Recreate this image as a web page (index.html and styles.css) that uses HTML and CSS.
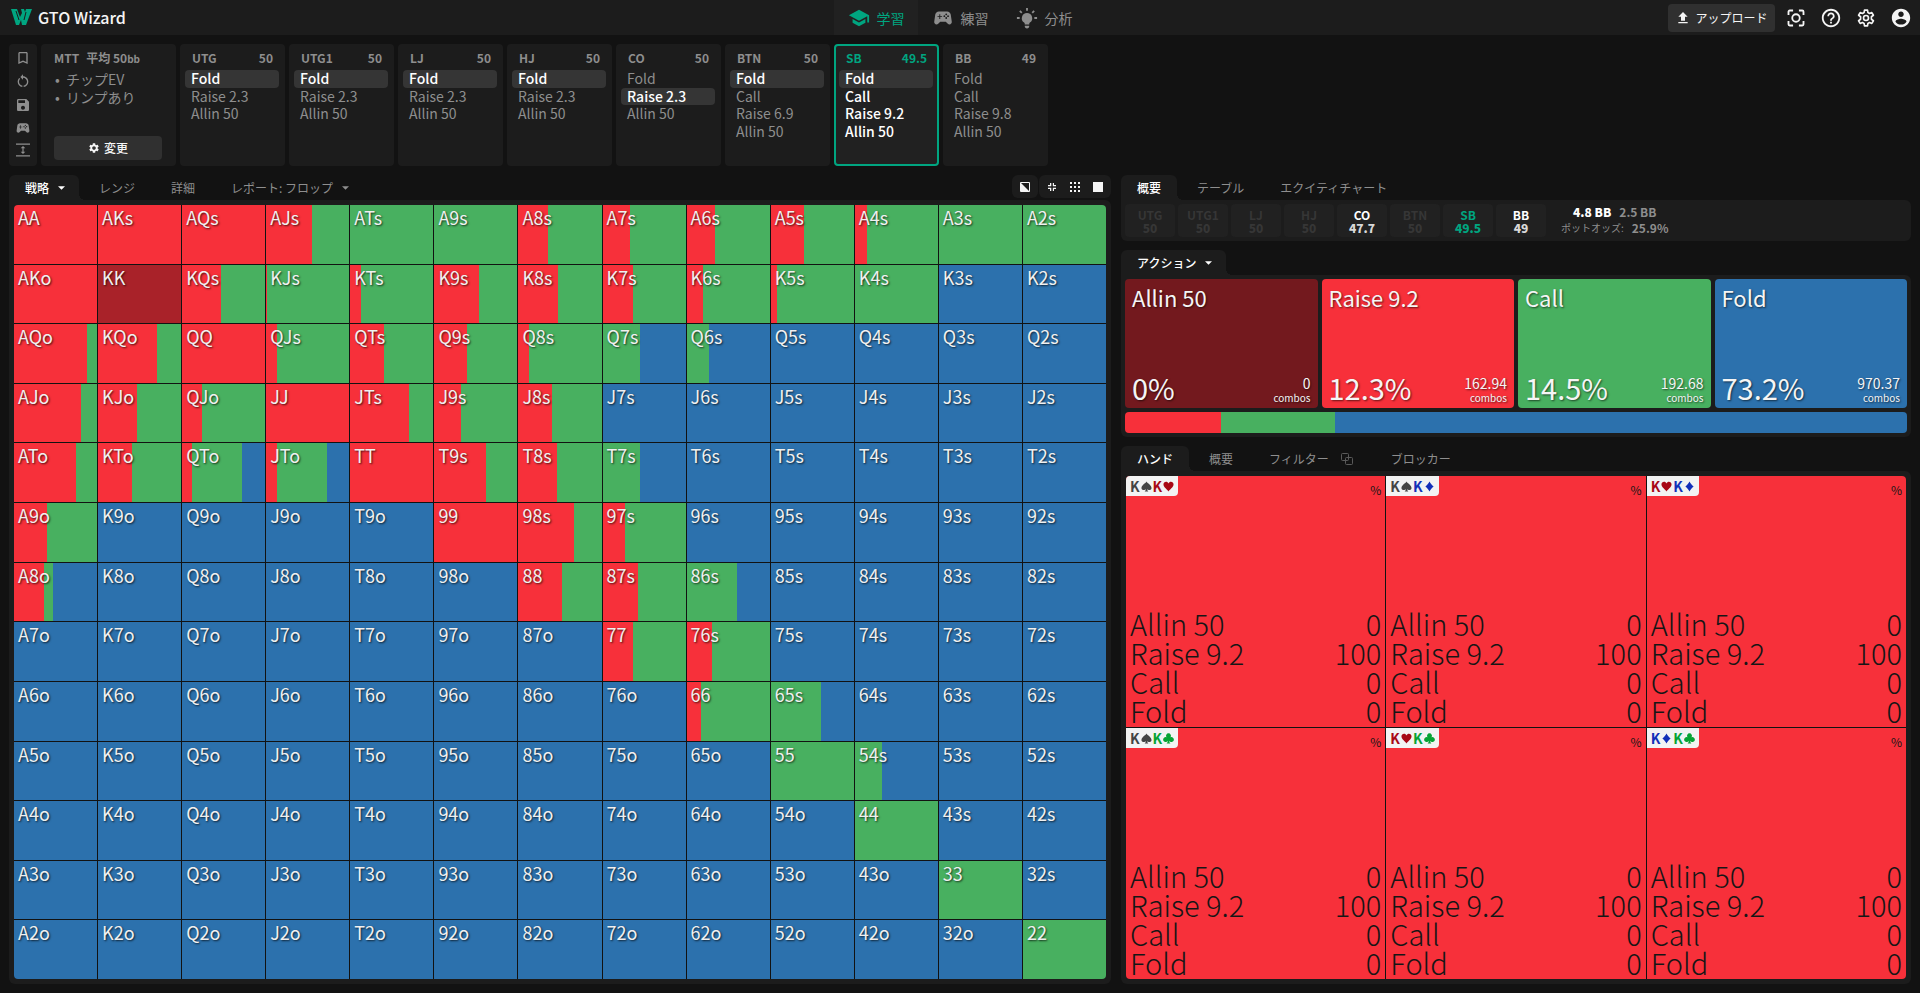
FILE: index.html
```html
<!DOCTYPE html>
<html lang="ja">
<head>
<meta charset="utf-8">
<title>GTO Wizard</title>
<link rel="stylesheet" href="styles.css">
</head>
<body>
<svg class="sprite" aria-hidden="true">
  <symbol id="i-school" viewBox="0 0 24 24"><path d="M5 13.18v4L12 21l7-3.82v-4L12 17l-7-3.82zM12 3L1 9l11 6 9-4.91V17h2V9L12 3z"/></symbol>
  <symbol id="i-pad" viewBox="0 0 24 24"><path fill-rule="evenodd" d="M21.58 16.09l-1.09-7.66C20.21 6.46 18.52 5 16.53 5H7.47C5.48 5 3.79 6.46 3.51 8.43l-1.09 7.66C2.2 17.63 3.39 19 4.94 19c.68 0 1.32-.27 1.8-.75L9 16h6l2.25 2.25c.48.48 1.13.75 1.8.75 1.56 0 2.75-1.37 2.53-2.91zM11 11H9v2H8v-2H6v-1h2V8h1v2h2zM15.5 7a1 1 0 1 1 0 2a1 1 0 0 1 0-2zM15.5 11a1 1 0 1 1 0 2a1 1 0 0 1 0-2zM13.5 9a1 1 0 1 1 0 2a1 1 0 0 1 0-2zM17.5 9a1 1 0 1 1 0 2a1 1 0 0 1 0-2z"/></symbol>
  <symbol id="i-bulb" viewBox="0 0 24 24"><path d="M12 6.5a5.7 5.7 0 0 0-3.2 10.4c.5.3.7.7.7 1.2v.9h5v-.9c0-.5.2-.9.7-1.2A5.7 5.7 0 0 0 12 6.500zM9.500 20.500h5c0 2-1 3-2.500 3s-2.500-1-2.500-3zM11 1h2v3h-2zM1 11h3v2H1zM20 11h3v2h-3zM3.500 5l1.400-1.400L7 5.700 5.600 7.100zM20.500 5l-1.400-1.400L17 5.700l1.400 1.400z"/></symbol>
  <symbol id="i-bookmark" viewBox="0 0 24 24"><path d="M17 3H7c-1.1 0-1.99.9-1.99 2L5 21l7-3 7 3V5c0-1.1-.9-2-2-2zm0 15l-5-2.18L7 18V5h10v13z"/></symbol>
  <symbol id="i-restart" viewBox="0 0 24 24"><path d="M12 5V2L8 6l4 4V7c3.31 0 6 2.69 6 6 0 2.97-2.17 5.43-5 5.91v2.02c3.95-.49 7-3.85 7-7.93 0-4.42-3.58-8-8-8zm-6 8c0-1.65.67-3.15 1.76-4.24L6.34 7.34C4.9 8.79 4 10.79 4 13c0 4.08 3.05 7.44 7 7.93v-2.02c-2.83-.48-5-2.94-5-5.91z"/></symbol>
  <symbol id="i-save" viewBox="0 0 24 24"><path d="M17 3H5c-1.110 0-2 .9-2 2v14c0 1.100.89 2 2 2h14c1.100 0 2-.9 2-2V7l-4-4zm-5 16c-1.660 0-3-1.340-3-3s1.340-3 3-3 3 1.340 3 3-1.340 3-3 3zm3-10H5V5h10v4z"/></symbol>
  <symbol id="i-expand" viewBox="0 0 24 24"><path d="M0 1h24v2H0zM0 21h24v2H0zM12 5l4 4h-3v6h3l-4 4-4-4h3V9H8z"/></symbol>
  <symbol id="i-gear" viewBox="0 0 24 24"><path d="M19.14 12.94c.04-.3.06-.61.06-.94 0-.32-.02-.64-.07-.94l2.03-1.58c.18-.14.23-.41.12-.61l-1.920-3.320c-.12-.22-.37-.29-.59-.22l-2.390.96c-.5-.38-1.030-.7-1.620-.94l-.36-2.540c-.04-.24-.24-.41-.48-.41h-3.840c-.24 0-.43.17-.47.41l-.36 2.540c-.59.24-1.130.57-1.620.94l-2.390-.96c-.22-.08-.47 0-.59.22L2.740 8.870c-.12.21-.08.47.12.61l2.030 1.580c-.05.3-.09.63-.09.94s.02.64.07.94l-2.030 1.580c-.18.14-.23.41-.12.61l1.920 3.320c.12.22.37.29.59.22l2.390-.96c.5.38 1.030.7 1.620.94l.36 2.540c.05.24.24.41.48.41h3.840c.24 0 .44-.17.47-.41l.36-2.540c.59-.24 1.130-.56 1.620-.94l2.390.96c.22.08.47 0 .59-.22l1.920-3.320c.12-.22.07-.47-.12-.61l-2.010-1.580zM12 15.600c-1.980 0-3.600-1.620-3.600-3.600s1.620-3.600 3.600-3.600 3.600 1.620 3.600 3.600-1.620 3.600-3.600 3.600z"/></symbol>
  <symbol id="i-gear-line" viewBox="0 0 24 24"><g fill="none" stroke="currentColor" stroke-width="2" stroke-linejoin="round"><path d="M10.200 2.500h3.600l.5 3 1.900 1.100 2.800-1.100 1.900 3.200-2.400 1.800v3l2.400 1.800-1.900 3.200-2.800-1.100-1.900 1.100-.5 3h-3.600l-.5-3-1.900-1.100-2.800 1.100-1.900-3.200 2.400-1.800v-3L3.100 8.700l1.900-3.200 2.800 1.100 1.900-1.100z"/><circle cx="12" cy="12" r="3"/></g></symbol>
  <symbol id="i-help" viewBox="0 0 24 24"><path d="M11 18h2v-2h-2v2zm1-16C6.480 2 2 6.480 2 12s4.480 10 10 10 10-4.480 10-10S17.520 2 12 2zm0 18c-4.410 0-8-3.590-8-8s3.590-8 8-8 8 3.590 8 8-3.590 8-8 8zm0-14c-2.210 0-4 1.790-4 4h2c0-1.100.9-2 2-2s2 .9 2 2c0 2-3 1.750-3 5h2c0-2.250 3-2.500 3-5 0-2.210-1.790-4-4-4z"/></symbol>
  <symbol id="i-user" viewBox="0 0 24 24"><path d="M12 2C6.480 2 2 6.480 2 12s4.480 10 10 10 10-4.480 10-10S17.520 2 12 2zm0 3c1.660 0 3 1.340 3 3s-1.340 3-3 3-3-1.340-3-3 1.340-3 3-3zm0 14.200c-2.500 0-4.710-1.280-6-3.220.03-1.990 4-3.080 6-3.080 1.990 0 5.970 1.090 6 3.080-1.290 1.940-3.500 3.220-6 3.220z"/></symbol>
  <symbol id="i-focus" viewBox="0 0 24 24"><g fill="none" stroke="currentColor" stroke-width="2.200"><path d="M3 8.500V4.500A1.500 1.500 0 0 1 4.500 3h4M15.500 3h4A1.500 1.500 0 0 1 21 4.500v4M21 15.500v4a1.500 1.500 0 0 1-1.500 1.500h-4M8.500 21h-4A1.500 1.500 0 0 1 3 19.500v-4"/><circle cx="12" cy="12" r="4.500"/></g></symbol>
  <symbol id="i-upload" viewBox="0 0 24 24"><path d="M5 20h14v-2H5v2zm0-10h4v6h6v-6h4l-7-7-7 7z"/></symbol>
  <symbol id="i-copy" viewBox="0 0 12 12"><g fill="none" stroke="currentColor"><rect x=".5" y=".5" width="7" height="7" rx="1"/><rect x="4.500" y="4.500" width="7" height="7" rx="1"/></g></symbol>
  <symbol id="i-caret" viewBox="0 0 8 4"><path d="M0 0h8L4 4z"/></symbol>
  <symbol id="i-half" viewBox="0 0 10 10"><path d="M1 1l8.500 8.500H1z"/><path fill="none" stroke="currentColor" d="M.5.5h9v9h-9z"/></symbol>
  <symbol id="i-shrink" viewBox="0 0 10 10"><path d="M3 1h1.300v3.200H1V3h2zM5.800 1H7v2h2v1.200H5.800zM1 5.800h3.300V9H3V7H1zM5.800 5.800H9V7H7v2H5.800z"/></symbol>
  <symbol id="i-dots" viewBox="0 0 10 10"><path d="M0 0h2v2H0zM4 0h2v2H4zM8 0h2v2H8zM0 4h2v2H0zM4 4h2v2H4zM8 4h2v2H8zM0 8h2v2H0zM4 8h2v2H4zM8 8h2v2H8z"/></symbol>
  <symbol id="i-square" viewBox="0 0 10 10"><path d="M0 0h10v10H0z"/></symbol>
  <symbol id="suit-s" viewBox="0 0 12 12"><path d="M6 .5C7 2.500 11.500 4.500 11.500 7.500c0 1.500-1.200 2.400-2.500 2.400-1 0-1.800-.5-2.300-1.200.1 1.200.5 2 1.300 2.800H4c.8-.8 1.200-1.600 1.300-2.800-.5.7-1.300 1.200-2.300 1.200C1.700 9.900.5 9 .5 7.500.5 4.500 5 2.500 6 .5z"/></symbol>
  <symbol id="suit-h" viewBox="0 0 12 12"><path d="M6 11.500C5 9 .5 7 .5 3.700.5 2 1.800.8 3.300.8 4.500.8 5.500 1.500 6 2.600 6.500 1.500 7.500.8 8.700.8c1.500 0 2.800 1.200 2.800 2.900C11.500 7 7 9 6 11.500z"/></symbol>
  <symbol id="suit-d" viewBox="0 0 12 12"><path d="M6 .5C7.200 2.800 8.700 4.600 10.500 6 8.700 7.400 7.200 9.200 6 11.500 4.800 9.200 3.300 7.400 1.500 6 3.300 4.600 4.800 2.800 6 .5z"/></symbol>
  <symbol id="suit-c" viewBox="0 0 12 12"><path d="M6 .4a2.600 2.600 0 0 1 2.100 4.200A2.700 2.700 0 1 1 6.700 8.400c.1 1.300.5 2.300 1.500 3.100H3.800c1-.8 1.400-1.800 1.500-3.100A2.700 2.700 0 1 1 3.900 4.600 2.600 2.600 0 0 1 6 .4z"/></symbol>
</svg>

<header class="topbar">
  <a class="brand" href="#">
    <svg class="brand-mark" viewBox="0 0 21 16"><path d="M0 0h6l3 8 2-4-1-4h3l1 3 1-3h6l-6 16h-4l-1-5-2 5H5z"/><path class="brand-cut" d="M5 2l3 9M15 3l-2 8" /></svg>
    <span>GTO Wizard</span>
  </a>
  <nav class="mainnav">
    <a class="navitem active" href="#"><svg class="ic22"><use href="#i-school"/></svg>学習</a>
    <a class="navitem" href="#"><svg class="ic22"><use href="#i-pad"/></svg>練習</a>
    <a class="navitem" href="#"><svg class="ic22"><use href="#i-bulb"/></svg>分析</a>
  </nav>
  <div class="account">
    <button class="upload"><svg class="ic16"><use href="#i-upload"/></svg>アップロード</button>
    <button class="iconbtn" aria-label="フォーカス"><svg class="ic20"><use href="#i-focus"/></svg></button>
    <button class="iconbtn" aria-label="ヘルプ"><svg class="ic22"><use href="#i-help"/></svg></button>
    <button class="iconbtn" aria-label="設定"><svg class="ic20"><use href="#i-gear-line"/></svg></button>
    <button class="iconbtn" aria-label="アカウント"><svg class="ic22"><use href="#i-user"/></svg></button>
  </div>
</header>

<section class="spots">
  <div class="tools">
    <button aria-label="ブックマーク"><svg class="ic16"><use href="#i-bookmark"/></svg></button>
    <button aria-label="リセット"><svg class="ic16"><use href="#i-restart"/></svg></button>
    <button aria-label="保存"><svg class="ic16"><use href="#i-save"/></svg></button>
    <button aria-label="練習"><svg class="ic16"><use href="#i-pad"/></svg></button>
    <button aria-label="展開"><svg class="ic14"><use href="#i-expand"/></svg></button>
  </div>
  <div class="format">
    <div class="format-head"><span>MTT</span><span>平均 50<small>bb</small></span></div>
    <ul class="format-list"><li>チップEV</li><li>リンプあり</li></ul>
    <button class="change"><svg class="ic12"><use href="#i-gear"/></svg>変更</button>
  </div>
  <div class="seats" id="seats"></div>
</section>

<main class="board">
  <section class="column">
    <div class="tabbar">
      <button class="tab active menu">戦略<svg class="caret"><use href="#i-caret"/></svg></button>
      <button class="tab">レンジ</button>
      <button class="tab">詳細</button>
      <button class="tab menu">レポート: フロップ<svg class="caret"><use href="#i-caret"/></svg></button>
      <div class="views">
        <div class="viewgroup"><button aria-label="分割"><svg class="ic10"><use href="#i-half"/></svg></button></div>
        <div class="viewgroup wide">
          <button aria-label="縮小"><svg class="ic10"><use href="#i-shrink"/></svg></button>
          <button aria-label="グリッド"><svg class="ic10"><use href="#i-dots"/></svg></button>
          <button aria-label="全体"><svg class="ic10"><use href="#i-square"/></svg></button>
        </div>
      </div>
    </div>
    <div class="panel fill framed"><div class="matrix" id="matrix"></div></div>
  </section>

  <section class="column stack">
    <div>
      <div class="tabbar">
        <button class="tab active">概要</button>
        <button class="tab">テーブル</button>
        <button class="tab">エクイティチャート</button>
      </div>
      <div class="panel stacks">
        <div class="stackbox">UTG<b>50</b></div>
        <div class="stackbox">UTG1<b>50</b></div>
        <div class="stackbox">LJ<b>50</b></div>
        <div class="stackbox">HJ<b>50</b></div>
        <div class="stackbox live">CO<b>47.7</b></div>
        <div class="stackbox">BTN<b>50</b></div>
        <div class="stackbox hero">SB<b>49.5</b></div>
        <div class="stackbox live">BB<b>49</b></div>
        <div class="pot">
          <div><strong>4.8 BB</strong><span>2.5 BB</span></div>
          <div><small>ポットオッズ:</small><span>25.9%</span></div>
        </div>
      </div>
    </div>
    <div>
      <div class="tabbar">
        <button class="tab active menu">アクション<svg class="caret"><use href="#i-caret"/></svg></button>
      </div>
      <div class="panel actions">
        <div class="cards">
          <button class="card allin"><span class="card-name">Allin 50</span><span class="card-foot"><span class="pct">0%</span><span class="combos">0<small>combos</small></span></span></button>
          <button class="card raise"><span class="card-name">Raise 9.2</span><span class="card-foot"><span class="pct">12.3%</span><span class="combos">162.94<small>combos</small></span></span></button>
          <button class="card call"><span class="card-name">Call</span><span class="card-foot"><span class="pct">14.5%</span><span class="combos">192.68<small>combos</small></span></span></button>
          <button class="card fold"><span class="card-name">Fold</span><span class="card-foot"><span class="pct">73.2%</span><span class="combos">970.37<small>combos</small></span></span></button>
        </div>
        <div class="freqbar">
          <div class="raise" style="width:12.3%"></div><div class="call" style="width:14.5%"></div><div class="fold" style="width:73.2%"></div>
        </div>
      </div>
    </div>
    <div class="column fill">
      <div class="tabbar">
        <button class="tab active">ハンド</button>
        <button class="tab">概要</button>
        <button class="tab filter">フィルター<svg class="ic12"><use href="#i-copy"/></svg></button>
        <button class="tab">ブロッカー</button>
      </div>
      <div class="panel fill framed"><div class="hands" id="hands"></div></div>
    </div>
  </section>
</main>
<script src="app.js"></script>
</body>
</html>
```
FILE: styles.css
```css
:root {
  --bg: #121212;
  --surface: #1c1c1c;
  --raised: #353535;
  --muted: #8e8e8e;
  --text: #f5f5f5;
  --accent: #00a580;
  --allin: #73191e;
  --raise: #f7303a;
  --call: #48b060;
  --fold: #2c71ad;
}
* { box-sizing: border-box; }
body {
  margin: 0;
  min-height: 100vh;
  display: flex;
  flex-direction: column;
  background: var(--bg);
  color: var(--muted);
  font: 14px/18px "Noto Sans CJK JP", "Noto Sans", sans-serif;
}
button {
  margin: 0;
  padding: 0;
  border: 0;
  background: none;
  color: inherit;
  font: inherit;
  cursor: pointer;
}
a { color: inherit; text-decoration: none; }
svg { display: block; fill: currentColor; flex: none; }
.sprite { position: absolute; width: 0; height: 0; }
.ic10 { width: 10px; height: 10px; }
.ic12 { width: 12px; height: 12px; }
.ic14 { width: 14px; height: 14px; }
.ic16 { width: 16px; height: 16px; }
.ic20 { width: 20px; height: 20px; }
.ic22 { width: 22px; height: 22px; }
.caret { width: 7px; height: 4px; }

/* Top bar */
.topbar {
  display: grid;
  grid-template-columns: 1fr auto 1fr;
  height: 35px;
  background: var(--surface);
}
.brand {
  display: flex;
  align-items: center;
  gap: 6px;
  padding: 0 0 2px 11px;
  color: var(--text);
  font-size: 16px;
  font-weight: 500;
}
.brand-mark { width: 21px; height: 16px; fill: var(--accent); }
.brand-cut { fill: none; stroke: var(--surface); stroke-width: 1; }
.mainnav { display: flex; }
.navitem {
  display: flex;
  align-items: center;
  justify-content: center;
  gap: 7px;
  width: 84px;
}
.navitem.active { background: #212121; color: var(--accent); }
.account {
  display: flex;
  align-items: center;
  justify-content: flex-end;
  padding-right: 2px;
  color: var(--text);
}
.upload {
  display: flex;
  align-items: center;
  justify-content: center;
  gap: 4px;
  width: 107px;
  height: 28px;
  margin-right: 3px;
  border-radius: 4px;
  background: #303030;
  font-size: 12px;
}
.iconbtn { display: grid; place-items: center; width: 35px; height: 28px; }

/* Spot history */
.spots { display: flex; gap: 4px; height: 122px; margin: 9px 9px 0; }
.tools {
  display: flex;
  flex-direction: column;
  justify-content: space-between;
  align-items: center;
  width: 28px;
  padding: 6px 0 9px;
  border-radius: 4px;
  background: var(--surface);
}
.format {
  display: flex;
  flex-direction: column;
  width: 135px;
  padding: 5px 14px 6px 13px;
  border-radius: 4px;
  background: var(--surface);
}
.format-head { display: flex; gap: 7px; font-size: 12px; font-weight: 700; }
.format-head small { font-size: 10px; }
.format-list { margin: 2px 0 0; padding: 0 0 0 12px; }
.format-list li::marker { content: "•  "; }
.change {
  display: flex;
  align-items: center;
  justify-content: center;
  gap: 4px;
  height: 24px;
  margin-top: auto;
  border-radius: 4px;
  background: #303030;
  color: var(--text);
  font-size: 12px;
  font-weight: 500;
}
.seats { display: flex; gap: 4px; }
.seat {
  width: 105px;
  padding: 5px 6px;
  border-radius: 4px;
  background: var(--surface);
}
.seat.hero {
  padding: 3px 4px;
  border: 2px solid var(--accent);
  background: #212121;
}
.seat-head {
  display: flex;
  justify-content: space-between;
  padding: 0 6px;
  margin-bottom: 3px;
  font-size: 12px;
  font-weight: 700;
}
.hero .seat-head { color: var(--accent); }
.moves { display: grid; grid-template-rows: repeat(4, 1fr); height: 70px; }
.move {
  width: 94px;
  margin-left: -1px;
  padding: 0 6px;
  border-radius: 4px;
  line-height: 17px;
  text-align: left;
}
.hero .move, .move.picked { color: #fff; font-weight: 500; }
.move.picked { background: var(--raised); }

/* Boards */
.board {
  flex: 1;
  display: grid;
  grid-template-columns: minmax(0, 1102fr) minmax(0, 790fr);
  gap: 10px;
  padding: 9px;
}
.column { display: flex; flex-direction: column; }
.stack { gap: 9px; }
.fill { flex: 1; }
.tabbar { display: flex; height: 25px; font-size: 12px; }
.tab {
  display: flex;
  align-items: center;
  gap: 9px;
  padding: 0 16px;
  margin-right: 4px;
}
.tab.menu { padding-right: 14px; }
.tab.active {
  position: relative;
  border-radius: 6px 6px 0 0;
  background: var(--surface);
  color: #fff;
  font-weight: 500;
}
.tab.active::after {
  content: "";
  position: absolute;
  left: 100%;
  bottom: 0;
  width: 6px;
  height: 6px;
  background: radial-gradient(circle at 100% 0, transparent 6px, var(--surface) 6px);
}
.tab.filter { gap: 12px; padding-right: 18px; }
.filter svg { color: #5a5a5a; }
.views { display: flex; gap: 1px; height: 23px; margin-left: auto; color: var(--text); }
.viewgroup { display: flex; border-radius: 6px; background: var(--surface); }
.viewgroup.wide { padding: 0 2px 0 1px; }
.viewgroup button { display: grid; place-items: center; width: 26px; }
.viewgroup.wide button { width: 23px; }
.panel { border-radius: 0 6px 6px 6px; background: var(--surface); }
.framed { display: flex; padding: 5px; }

/* Strategy matrix */
.matrix {
  flex: 1;
  display: grid;
  grid-template-columns: repeat(13, 1fr);
  grid-template-rows: repeat(13, 1fr);
  gap: 1px;
  overflow: hidden;
  border-radius: 4px;
  background: var(--bg);
}
.cell {
  padding: 0 4px;
  background: linear-gradient(90deg, var(--raise) var(--r), var(--call) var(--r), var(--call) var(--c), var(--fold) var(--c));
  color: #f0f0f0;
  font-size: 18px;
  line-height: 25px;
  text-shadow: 1px 1px 2px rgba(0, 0, 0, .7);
}
.cell.selected { background: #a92229; }

/* Stacks and pot */
.stacks { display: flex; gap: 3px; padding: 4px; }
.stackbox {
  display: flex;
  flex-direction: column;
  align-items: center;
  width: 50px;
  padding: 4px 0 3px;
  border-radius: 4px;
  background: #212121;
  color: #363636;
  font-size: 12px;
  font-weight: 700;
  line-height: 13px;
}
.stackbox.live { color: #fff; }
.stackbox.live b { color: #d8d8d8; }
.stackbox.hero { color: var(--accent); }
.pot {
  display: flex;
  flex-direction: column;
  align-items: center;
  margin-left: 12px;
  font-size: 12px;
  font-weight: 700;
  line-height: 16px;
}
.pot div { display: flex; align-items: center; gap: 8px; }
.pot strong { color: #fff; }
.pot small { font-size: 10px; font-weight: 400; }

/* Action summary */
.allin { background: var(--allin); }
.raise { background: var(--raise); }
.call { background: var(--call); }
.fold { background: var(--fold); }
.actions { padding: 4px; }
.cards { display: grid; grid-template-columns: repeat(4, 1fr); gap: 4px; height: 129px; }
.card {
  display: flex;
  flex-direction: column;
  justify-content: space-between;
  padding: 4px 7px 4px;
  border-radius: 4px;
  color: var(--text);
  text-align: left;
  text-shadow: 1px 1px 2px rgba(0, 0, 0, .6);
}
.card-name { font-size: 22px; line-height: 28px; }
.card-foot { display: flex; justify-content: space-between; align-items: flex-end; }
.pct { font-size: 29px; line-height: 34px; }
.combos { display: grid; justify-items: end; font-size: 14px; line-height: 15px; }
.combos small { font-size: 10px; line-height: 13px; }
.freqbar {
  display: flex;
  height: 21px;
  margin-top: 4px;
  overflow: hidden;
  border-radius: 4px;
}

/* Hand combos */
.hands {
  flex: 1;
  display: grid;
  grid-template-columns: repeat(3, 1fr);
  grid-template-rows: repeat(2, 1fr);
  gap: 1px;
  border-radius: 4px;
  background: var(--bg);
}
.hand {
  display: flex;
  flex-direction: column;
  justify-content: space-between;
  background: var(--raise);
  color: #161616;
}
.hand:nth-child(1), .hand:nth-child(1) .combo { border-top-left-radius: 4px; }
.hand:nth-child(3) { border-top-right-radius: 4px; }
.hand:nth-child(4) { border-bottom-left-radius: 4px; }
.hand:nth-child(6) { border-bottom-right-radius: 4px; }
.hand-head { display: flex; justify-content: space-between; align-items: flex-start; }
.combo {
  display: flex;
  align-items: center;
  gap: 1px;
  height: 20px;
  padding: 0 4px;
  border-bottom-right-radius: 4px;
  background: #f3f3f3;
  font-weight: 700;
}
.combo span { display: flex; align-items: center; gap: 1px; }
.combo svg { width: 11px; height: 11px; }
.s { color: #444; }
.h { color: #a80815; }
.d { color: #1230b8; }
.c { color: #06a334; }
.unit { padding: 5px 4px 0 0; font-size: 12px; }
.odds { margin: 0; padding: 0 4px 2px; font-size: 29px; font-weight: 300; line-height: 29px; }
.odds div { display: flex; justify-content: space-between; }
.odds dd { margin: 0; }
```
FILE: app.js
```js
const seats = [
  ["UTG", "50", ["Fold", "Raise 2.3", "Allin 50"], 0],
  ["UTG1", "50", ["Fold", "Raise 2.3", "Allin 50"], 0],
  ["LJ", "50", ["Fold", "Raise 2.3", "Allin 50"], 0],
  ["HJ", "50", ["Fold", "Raise 2.3", "Allin 50"], 0],
  ["CO", "50", ["Fold", "Raise 2.3", "Allin 50"], 1],
  ["BTN", "50", ["Fold", "Call", "Raise 6.9", "Allin 50"], 0],
  ["SB", "49.5", ["Fold", "Call", "Raise 9.2", "Allin 50"], 0],
  ["BB", "49", ["Fold", "Call", "Raise 9.8", "Allin 50"], -1]
];
document.getElementById("seats").innerHTML = seats.map(([pos, stack, moves, picked]) =>
  `<div class="seat${pos === "SB" ? " hero" : ""}">
    <div class="seat-head"><span>${pos}</span><span>${stack}</span></div>
    <div class="moves">${moves.map((m, i) =>
      `<button class="move${i === picked ? " picked" : ""}">${m}</button>`).join("")}</div>
  </div>`).join("");

/* Per hand: [raise %, cumulative raise + call %]; hands not listed always fold. */
const mix = {
  AA: [100, 100], AKs: [100, 100], AQs: [100, 100], AJs: [56, 100], ATs: [0, 100], A9s: [0, 100],
  A8s: [36, 100], A7s: [33, 100], A6s: [34, 100], A5s: [40, 100], A4s: [15, 100], A3s: [0, 100], A2s: [0, 100],
  AKo: [100, 100], KK: [100, 100], KQs: [47, 100], KJs: [1, 100], KTs: [13, 100], K9s: [54, 100],
  K8s: [48, 100], K7s: [36, 100], K6s: [19, 100], K5s: [7, 100], K4s: [0, 100],
  AQo: [88, 100], KQo: [71, 100], QQ: [100, 100], QJs: [13, 100], QTs: [41, 100], Q9s: [40, 100],
  Q8s: [13, 100], Q7s: [0, 44], Q6s: [0, 27],
  AJo: [81, 100], KJo: [47, 100], QJo: [24, 100], JJ: [100, 100], JTs: [71, 100], J9s: [33, 100], J8s: [40, 100],
  ATo: [75, 100], KTo: [41, 100], QTo: [12, 72], JTo: [13, 73], TT: [100, 100], T9s: [63, 100],
  T8s: [46, 100], T7s: [0, 44],
  A9o: [40, 100], 99: [100, 100], "98s": [67, 100], "97s": [26, 100],
  A8o: [36, 47], 88: [52, 100], "87s": [42, 100], "86s": [0, 60],
  77: [36, 100], "76s": [30, 100], 66: [17, 100], "65s": [0, 60],
  55: [0, 100], "54s": [0, 33], 44: [0, 100], 33: [0, 100], 22: [0, 100]
};
const ranks = "AKQJT98765432";
let cells = "";
for (let row = 0; row < 13; row++) {
  for (let col = 0; col < 13; col++) {
    const name = row === col ? ranks[row] + ranks[row]
      : col > row ? ranks[row] + ranks[col] + "s" : ranks[col] + ranks[row] + "o";
    const [r, c] = mix[name] || [0, 0];
    cells += `<div class="cell${name === "KK" ? " selected" : ""}" style="--r:${r}%;--c:${c}%">${name}</div>`;
  }
}
document.getElementById("matrix").innerHTML = cells;

const odds = [["Allin 50", 0], ["Raise 9.2", 100], ["Call", 0], ["Fold", 0]];
document.getElementById("hands").innerHTML = ["sh", "sd", "hd", "sc", "hc", "dc"].map(pair =>
  `<div class="hand">
    <div class="hand-head">
      <div class="combo">${[...pair].map(s => `<span class="${s}">K<svg><use href="#suit-${s}"/></svg></span>`).join("")}</div>
      <div class="unit">%</div>
    </div>
    <dl class="odds">${odds.map(([k, v]) => `<div><dt>${k}</dt><dd>${v}</dd></div>`).join("")}</dl>
  </div>`).join("");
```
